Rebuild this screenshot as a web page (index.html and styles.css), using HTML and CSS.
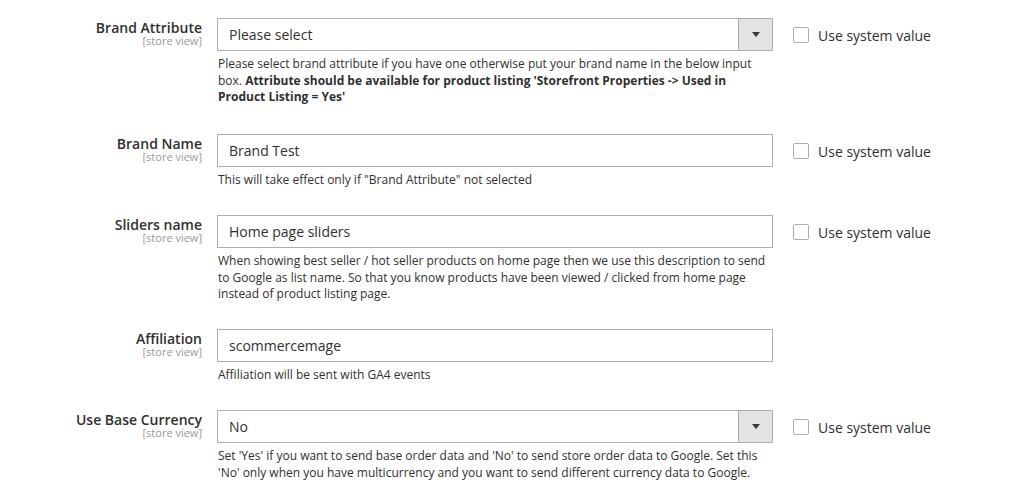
FILE: index.html
```html
<!DOCTYPE html>
<html lang="en">
<head>
<meta charset="utf-8">
<title>Config</title>
<link rel="stylesheet" href="styles.css">
</head>
<body>
<div class="config">
  <div class="row row--spaced">
    <div class="label"><span class="label-text">Brand Attribute</span><span class="scope">[store view]</span></div>
    <div class="value">
      <div class="select"><span class="select-text">Please select</span><span class="select-btn"><span class="arrow"></span></span></div>
      <p class="note">Please select brand attribute if you have one otherwise put your brand name in the below input box. <strong>Attribute should be available for product listing 'Storefront Properties -&gt; Used in Product Listing = Yes'</strong></p>
    </div>
    <div class="system"><span class="box"></span><span class="system-text">Use system value</span></div>
  </div>

  <div class="row">
    <div class="label"><span class="label-text">Brand Name</span><span class="scope">[store view]</span></div>
    <div class="value">
      <div class="input">Brand Test</div>
      <p class="note">This will take effect only if "Brand Attribute" not selected</p>
    </div>
    <div class="system"><span class="box"></span><span class="system-text">Use system value</span></div>
  </div>

  <div class="row">
    <div class="label"><span class="label-text">Sliders name</span><span class="scope">[store view]</span></div>
    <div class="value">
      <div class="input">Home page sliders</div>
      <p class="note">When showing best seller / hot seller products on home page then we use this description to send to Google as list name. So that you know products have been viewed / clicked from home page instead of product listing page.</p>
    </div>
    <div class="system"><span class="box"></span><span class="system-text">Use system value</span></div>
  </div>

  <div class="row">
    <div class="label"><span class="label-text">Affiliation</span><span class="scope">[store view]</span></div>
    <div class="value">
      <div class="input">scommercemage</div>
      <p class="note">Affiliation will be sent with GA4 events</p>
    </div>
    <div class="system"></div>
  </div>

  <div class="row">
    <div class="label"><span class="label-text">Use Base Currency</span><span class="scope">[store view]</span></div>
    <div class="value">
      <div class="select"><span class="select-text">No</span><span class="select-btn"><span class="arrow"></span></span></div>
      <p class="note">Set 'Yes' if you want to send base order data and 'No' to send store order data to Google. Set this 'No' only when you have multicurrency and you want to send different currency data to Google.</p>
    </div>
    <div class="system"><span class="box"></span><span class="system-text">Use system value</span></div>
  </div>
</div>
</body>
</html>
```

FILE: styles.css
```css
* { box-sizing: border-box; }

html, body {
  margin: 0;
  padding: 0;
  background: #ffffff;
}

body {
  font-family: "Open Sans", "Liberation Sans", sans-serif;
  color: #303030;
}

.config {
  display: flex;
  flex-direction: column;
  gap: 26.5px;
  padding-top: 18px;
}

.row {
  display: grid;
  grid-template-columns: 217px 556px 1fr;
  align-items: start;
}

.row--spaced {
  margin-bottom: 2px;
}

.label {
  display: flex;
  flex-direction: column;
  align-items: flex-end;
  padding-right: 15px;
  padding-top: 2px;
}

.label-text {
  font-size: 14px;
  font-weight: 600;
  line-height: 15px;
  color: #303030;
}

.scope {
  font-size: 11px;
  line-height: 11px;
  color: #999999;
}

.value {
  min-width: 0;
}

.input,
.select {
  height: 33px;
  border: 1px solid #adadad;
  background: #ffffff;
  font-size: 14px;
  color: #303030;
  display: flex;
  align-items: center;
}

.input {
  padding: 0 11px;
}

.select-text {
  flex: 1;
  padding-left: 11px;
}

.select-btn {
  width: 34px;
  height: 100%;
  background: #e3e3e3;
  border-left: 1px solid #adadad;
  display: flex;
  align-items: center;
  justify-content: center;
}

.arrow {
  width: 0;
  height: 0;
  border-left: 4.5px solid transparent;
  border-right: 4.5px solid transparent;
  border-top: 5px solid #41362f;
}

.note {
  margin: 5px 0 0;
  padding-left: 1px;
  font-size: 12px;
  line-height: 16.5px;
  color: #303030;
}

.note strong {
  font-weight: 700;
}

.system {
  display: flex;
  align-items: center;
  height: 33px;
  padding-left: 20px;
  padding-top: 1px;
}

.box {
  width: 16px;
  height: 16px;
  border: 1px solid #adadad;
  border-radius: 2px;
  background: #ffffff;
  margin-right: 9px;
  flex: none;
}

.system-text {
  font-size: 14px;
  color: #303030;
  white-space: nowrap;
}
```
